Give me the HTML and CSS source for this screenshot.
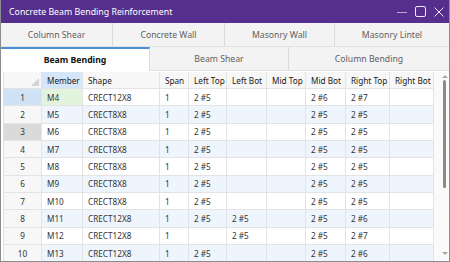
FILE: index.html
```html
<!DOCTYPE html>
<html lang="en">
<head>
    <meta charset="UTF-8">
    <title>Concrete Beam Bending Reinforcement</title>
    <link rel="stylesheet" href="styles.css">
</head>
<body>
    <div class="window">
        <!-- Title bar -->
        <div class="titlebar">
            <span class="title">Concrete Beam Bending Reinforcement</span>
            <div class="controls">
                <svg width="10" height="10" viewBox="0 0 10 10"><line x1="0" y1="5.5" x2="10" y2="5.5" stroke="#b9a6d6" stroke-width="1"/></svg>
                <svg width="11" height="11" viewBox="0 0 11 11"><rect x="0.5" y="0.5" width="10" height="10" rx="1.5" fill="none" stroke="#eee8f6" stroke-width="1"/></svg>
                <svg width="10" height="10" viewBox="0 0 10 10"><path d="M0.5 0.5 L9.5 9.5 M9.5 0.5 L0.5 9.5" stroke="#eee8f6" stroke-width="1"/></svg>
            </div>
        </div>

        <!-- Tabs -->
        <div class="tab-row">
            <div class="tab" style="width:112px">Column Shear</div>
            <div class="tab" style="width:112px">Concrete Wall</div>
            <div class="tab" style="width:110px">Masonry Wall</div>
            <div class="tab last" style="width:114px">Masonry Lintel</div>
        </div>
        <div class="tab-row">
            <div class="tab active" style="width:149px">Beam Bending</div>
            <div class="tab" style="width:139px">Beam Shear</div>
            <div class="tab last" style="width:160px">Column Bending</div>
        </div>

        <!-- Grid -->
        <div class="grid-area">
            <table class="sheet">
                <colgroup>
                    <col style="width:38px"><col style="width:41px"><col style="width:77px"><col style="width:29px">
                    <col style="width:38px"><col style="width:40px"><col style="width:39px"><col style="width:40px">
                    <col style="width:44px"><col style="width:44px">
                </colgroup>
                <thead>
                    <tr>
                        <th class="corner"><span class="tri"></span></th>
                        <th class="sel-col">Member</th>
                        <th>Shape</th>
                        <th>Span</th>
                        <th>Left Top</th>
                        <th>Left Bot</th>
                        <th>Mid Top</th>
                        <th>Mid Bot</th>
                        <th>Right Top</th>
                        <th>Right Bot</th>
                    </tr>
                </thead>
                <tbody>
                    <tr><td class="rh sel">1</td><td class="cur">M4</td><td>CRECT12X8</td><td>1</td><td>2 #5</td><td></td><td></td><td>2 #6</td><td>2 #7</td><td></td></tr>
                    <tr class="alt"><td class="rh">2</td><td>M5</td><td>CRECT8X8</td><td>1</td><td>2 #5</td><td></td><td></td><td>2 #5</td><td>2 #5</td><td></td></tr>
                    <tr><td class="rh hover">3</td><td>M6</td><td>CRECT8X8</td><td>1</td><td>2 #5</td><td></td><td></td><td>2 #5</td><td>2 #5</td><td></td></tr>
                    <tr class="alt"><td class="rh">4</td><td>M7</td><td>CRECT8X8</td><td>1</td><td>2 #5</td><td></td><td></td><td>2 #5</td><td>2 #5</td><td></td></tr>
                    <tr><td class="rh">5</td><td>M8</td><td>CRECT8X8</td><td>1</td><td>2 #5</td><td></td><td></td><td>2 #5</td><td>2 #5</td><td></td></tr>
                    <tr class="alt"><td class="rh">6</td><td>M9</td><td>CRECT8X8</td><td>1</td><td>2 #5</td><td></td><td></td><td>2 #5</td><td>2 #5</td><td></td></tr>
                    <tr><td class="rh">7</td><td>M10</td><td>CRECT8X8</td><td>1</td><td>2 #5</td><td></td><td></td><td>2 #5</td><td>2 #5</td><td></td></tr>
                    <tr class="alt"><td class="rh">8</td><td>M11</td><td>CRECT12X8</td><td>1</td><td>2 #5</td><td>2 #5</td><td></td><td>2 #5</td><td>2 #6</td><td></td></tr>
                    <tr><td class="rh">9</td><td>M12</td><td>CRECT12X8</td><td>1</td><td></td><td>2 #5</td><td></td><td>2 #5</td><td>2 #7</td><td></td></tr>
                    <tr class="alt"><td class="rh">10</td><td>M13</td><td>CRECT12X8</td><td>1</td><td>2 #5</td><td></td><td></td><td>2 #5</td><td>2 #6</td><td></td></tr>
                </tbody>
            </table>
            <div class="scrollbar">
                <span class="arrow up"></span>
                <span class="thumb"></span>
                <span class="arrow down"></span>
            </div>
        </div>
    </div>
</body>
</html>
```

FILE: styles.css
```css
/* Base */
html, body {
    margin: 0;
    padding: 0;
    background: #ffffff;
}

body {
    font-family: "Noto Sans", sans-serif;
}

.window {
    width: 450px;
    height: 262px;
    box-sizing: border-box;
    border: 1px solid #8c8c8c;
    border-top: none;
    display: flex;
    flex-direction: column;
    overflow: hidden;
    background: #ffffff;
}

/* Title bar */
.titlebar {
    height: 23px;
    margin: 0 -1px;
    background: #562f8e;
    display: flex;
    align-items: center;
    justify-content: space-between;
    padding: 0 6px 0 9px;
    flex-shrink: 0;
}

.title {
    color: #ffffff;
    font-size: 8.8px;
}

.controls {
    display: flex;
    align-items: center;
    gap: 8px;
}

.controls svg {
    display: block;
}

/* Tabs */
.tab-row {
    display: flex;
    height: 24px;
    flex-shrink: 0;
    background: #f3f3f3;
    border-bottom: 1px solid #e2e2e2;
    box-sizing: border-box;
}

.tab {
    box-sizing: border-box;
    display: flex;
    align-items: center;
    justify-content: center;
    font-size: 8.7px;
    color: #5f5f5f;
    border-right: 1px solid #dcdcdc;
}

.tab.last {
    border-right: none;
}

.tab.active {
    background: #ffffff;
    color: #111111;
    font-weight: bold;
    border-top: 2px solid #4a90d9;
    margin-bottom: -1px;
}

/* Grid */
.grid-area {
    flex: 1;
    display: flex;
    padding: 1px 1px 0 2px;
    min-height: 0;
}

.sheet {
    table-layout: fixed;
    border-collapse: collapse;
    width: 431px;
    font-size: 8.2px;
    color: #333333;
    border-left: 1px solid #cfcfcf;
}

.sheet th {
    height: 16px;
    padding: 0 5px;
    text-align: left;
    font-weight: normal;
    color: #1a1a1a;
    background: #f7f7f7;
    border: 1px solid #e3e3e3;
    border-top: none;
    white-space: nowrap;
    overflow: hidden;
}

.sheet th.sel-col {
    background: #d5e6f8;
}

.sheet th.corner {
    position: relative;
}

.tri {
    position: absolute;
    right: 2px;
    bottom: 2px;
    width: 0;
    height: 0;
    border-left: 8px solid transparent;
    border-bottom: 8px solid #d4d4d4;
}

.sheet tbody tr {
    height: 17.35px;
}

.sheet td {
    padding: 0 5px;
    border: 1px solid #e3e3e3;
    white-space: nowrap;
    overflow: hidden;
}

.sheet tr.alt td {
    background: #eef5fd;
}

.sheet td.rh {
    text-align: center;
    background: #f7f7f7;
    color: #333333;
}

.sheet tr.alt td.rh {
    background: #f7f7f7;
}

.sheet td.rh.sel {
    background: #cfe2f6;
}

.sheet td.rh.hover {
    background: #dadada;
}

.sheet td.cur {
    background: #e2f4dd;
}

/* Scrollbar */
.scrollbar {
    width: 14px;
    position: relative;
    background: #fafafa;
}

.thumb {
    position: absolute;
    left: 9px;
    top: 8px;
    width: 3px;
    height: 108px;
    border-radius: 2px;
    background: #8a8a8a;
}

.arrow {
    position: absolute;
    left: 8px;
    width: 0;
    height: 0;
    border-left: 3px solid transparent;
    border-right: 3px solid transparent;
}

.arrow.up {
    top: 3px;
    border-bottom: 3px solid #a8a8a8;
}

.arrow.down {
    bottom: 6px;
    border-top: 3px solid #a8a8a8;
}
```
